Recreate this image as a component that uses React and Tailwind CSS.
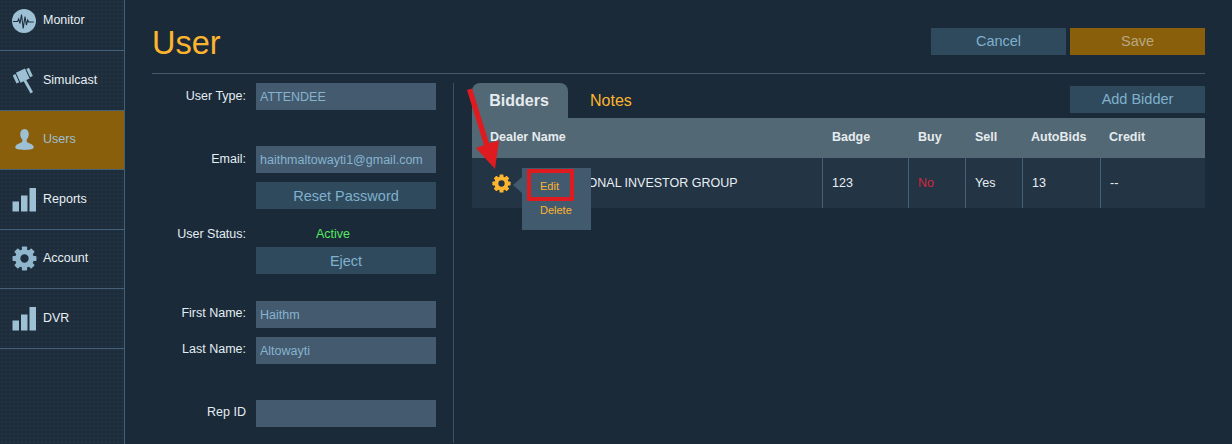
import React from "react";

const Pulse = () => (
  <svg width="24" height="24" viewBox="0 0 24 24">
    <circle cx="12" cy="12" r="12" fill="#9dc0d4" />
    <path d="M1 12.500h4.500l1.200-2.500 1.300 4.500 1.500-9 1.700 14 1.800-12 1.400 8.500 1.300-5 1 2h5" fill="none" stroke="#1e3040" strokeWidth="1.100" />
  </svg>
);
const Gavel = () => (
  <svg width="25" height="26" viewBox="0 0 25 26">
    <g fill="#9dc0d4">
      <g transform="rotate(-25 11 7)">
        <rect x="1.500" y="3" width="3" height="9" />
        <rect x="5.500" y="2" width="10" height="11" />
        <rect x="16.500" y="3" width="3" height="9" />
      </g>
      <path d="M11.500 13l2.500-1.500 7 12.500-2.500 1.500z" />
    </g>
  </svg>
);
const Person = () => (
  <svg width="19" height="21" viewBox="0 0 20 22">
    <path d="M10 0c3 0 4.500 2.300 4.500 5.500 0 2.400-1 4.300-2.200 5.500v2c0 1 3.200 1.700 5.200 3 1.500 1 2.200 2 2.200 3.500 0 1.500-4 2.500-9.700 2.500S.3 21 .3 19.500c0-1.500.7-2.500 2.200-3.500 2-1.300 5.200-2 5.200-3v-2C6.500 9.800 5.500 7.900 5.500 5.500 5.500 2.300 7 0 10 0z" fill="#9dc0d4" />
  </svg>
);
const Bars = () => (
  <svg width="25" height="25" viewBox="0 0 25 25">
    <rect x="0.500" y="14.500" width="6.500" height="10" fill="#9dc0d4" />
    <rect x="9" y="8.500" width="6.500" height="16" fill="#9dc0d4" />
    <rect x="17.500" y="1" width="6.500" height="23.500" fill="#9dc0d4" />
  </svg>
);
const Gear = ({ size, color }) => {
  const teeth = [0, 45, 90, 135, 180, 225, 270, 315];
  return (
    <svg width={size} height={size} viewBox="0 0 24 24">
      <g fill={color}>
        {teeth.map((a) => (
          <rect key={a} x="9.500" y="0.500" width="5" height="5" rx="0.800" transform={`rotate(${a} 12 12)`} />
        ))}
      </g>
      <circle cx="12" cy="12" r="6.500" fill="none" stroke={color} strokeWidth="5" />
    </svg>
  );
};

const nav = [
  { label: "Monitor", icon: <Pulse />, h: "h-[51px] pb-[9px]" },
  { label: "Simulcast", icon: <Gavel />, h: "h-[60px]" },
  { label: "Users", icon: <div className="ml-[3px]"><Person /></div>, active: true, h: "h-[59px] pb-[2px]" },
  { label: "Reports", icon: <Bars />, h: "h-[60px]" },
  { label: "Account", icon: <Gear size={25} color="#8fb6cd" />, h: "h-[59px] pb-[2px]" },
  { label: "DVR", icon: <Bars />, h: "h-[60px]" },
];

const Btn = ({ children, className = "" }) => (
  <div className={`h-[27px] flex items-center justify-center text-[14.5px] pt-[2px] text-[#7fb0cc] bg-[#2f4a5d] ${className}`}>{children}</div>
);
const Field = ({ label, value, className = "", labelClass = "pt-[4px]" }) => (
  <div className={`flex ${className}`}>
    <div className={`w-[94px] text-right text-[12.500px] text-[#e4edf2] ${labelClass}`}>{label}</div>
    <div className="ml-[10px] w-[180px] h-[27px] bg-[#445a6e] text-[#86b4d0] text-[12.500px] pl-1 pt-[2px] flex items-center">{value}</div>
  </div>
);

const cols = [
  { w: "w-[350px]", h: "Dealer Name" },
  { w: "w-[86px]", h: "Badge", v: "123" },
  { w: "w-[57px]", h: "Buy", v: "No", c: "text-[#d2273c]" },
  { w: "w-[57px]", h: "Sell", v: "Yes" },
  { w: "w-[78px]", h: "AutoBids", v: "13" },
  { w: "flex-1", h: "Credit", v: "--" },
];

export default function App() {
  return (
    <div className="flex h-[444px] w-[1232px] overflow-hidden bg-[#1a2a39] font-['Liberation_Sans',Arial,sans-serif]">
      <aside className="w-[125px] shrink-0 border-r border-[#45617a] bg-[#1e2d3b] bg-[radial-gradient(#233342_1px,transparent_1px)] bg-[length:4px_4px]">
        {nav.map((n) => (
          <div key={n.label} className={`${n.h} border-b border-[#45617a] flex items-center ${n.active ? "bg-[#8a5f0b]" : ""}`}>
            <div className="w-[43px] shrink-0 pl-3 flex items-center">{n.icon}</div>
            <span className={`text-[12.500px] ${n.active ? "text-[#9dc0d4]" : "text-[#e8eff3]"}`}>{n.label}</span>
          </div>
        ))}
      </aside>

      <main className="w-[1053px] ml-[27px] relative">
        <header className="flex justify-between h-[74px] border-b border-[#45596b]">
          <h1 className="text-[32.500px] text-[#fdb52f] mt-[23px] leading-[40px]">User</h1>
          <div className="flex gap-1 mt-[28px]">
            <Btn className="w-[135px] !pt-0">Cancel</Btn>
            <Btn className="w-[135px] !pt-0 !bg-[#8a5f0b] !text-[#b7a882]">Save</Btn>
          </div>
        </header>

        <div className="flex pt-[9px]">
          <div className="w-[302px] shrink-0 border-r border-[#3b5062] h-[360px]">
            <Field label="User Type:" value="ATTENDEE" />
            <Field label="Email:" value="haithmaltowayti1@gmail.com" className="mt-[36px]" />
            <Btn className="ml-[104px] w-[180px] mt-[9px]">Reset Password</Btn>
            <div className="flex mt-[16px] h-[22px] text-[12.500px]">
              <div className="w-[94px] text-right text-[#e4edf2]">User Status:</div>
              <div className="ml-[70px] text-[#57e85f]">Active</div>
            </div>
            <Btn className="ml-[104px] w-[180px]">Eject</Btn>
            <Field label="First Name:" value="Haithm" className="mt-[27px]" labelClass="pt-[3px]" />
            <Field label="Last Name:" value="Altowayti" className="mt-[9px]" labelClass="pt-[3px]" />
            <Field label="Rep ID" value="" className="mt-[36px]" labelClass="pt-[3px]" />
          </div>

          <section className="ml-[18px] flex-1 relative">
            <div className="flex justify-between h-[35px]">
              <div className="flex">
                <div className="w-[96px] h-[35px] rounded-t-lg bg-[#526875] text-[#e6ebee] font-bold text-[16px] pr-[2px] flex items-center justify-center">Bidders</div>
                <div className="ml-[22px] text-[#fdb52f] text-[16px] leading-[35px]">Notes</div>
              </div>
              <Btn className="w-[135px] mt-[3px] !pt-[1px]">Add Bidder</Btn>
            </div>
            <div className="flex h-[40px] pb-[2px] bg-[#526875] text-[#e6ebee] font-bold text-[12.500px]">
              {cols.map((c, i) => (
                <div key={c.h} className={`${c.w} flex items-center ${i === 0 ? "pl-[18px]" : i > 3 ? "pl-[9px]" : "pl-[10px]"}`}>{c.h}</div>
              ))}
            </div>
            <div className="flex h-[50px] bg-[#233445] text-[#e8eff3] text-[12.500px]">
              <div className="w-[350px] flex items-center pl-[20px]">
                <Gear size={19} color="#fdb52f" />
                <span className="ml-[49px] whitespace-nowrap">NATIONAL INVESTOR GROUP</span>
              </div>
              {cols.slice(1).map((c) => (
                <div key={c.h} className={`${c.w} flex items-center pl-[9px] border-l border-[#45617a] ${c.c || ""}`}>{c.v}</div>
              ))}
            </div>

            <div className="absolute left-[50px] top-[85px] w-[69px] h-[62px] bg-[#425a6e] text-[#fdb52f] text-[11px]">
              <div className="absolute left-[-9px] top-[9px] w-0 h-0 border-y-[8px] border-y-transparent border-r-[9px] border-r-[#425a6e]" />
              <div className="absolute left-[5px] top-[1px] w-[47px] h-[32px] border-4 border-[#e01b1f] flex items-center justify-center pr-[2px] pt-[3px]">Edit</div>
              <div className="absolute left-[18px] top-[35px] leading-[14px]">Delete</div>
            </div>
            <svg className="absolute left-[-12px] top-0" width="50" height="90" viewBox="0 0 50 90">
              <path d="M7 7 12 5.500 29 60 39 57.500 35 86 16 65 24 62z" fill="#e01b1f" />
            </svg>
          </section>
        </div>
      </main>
    </div>
  );
}
